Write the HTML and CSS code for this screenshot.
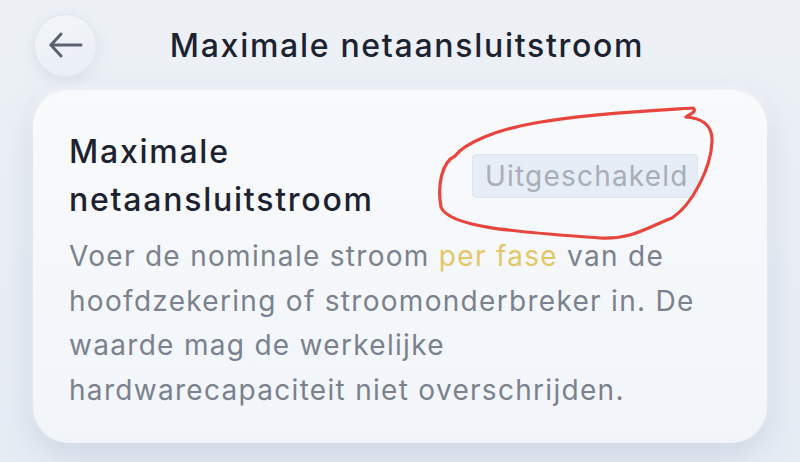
FILE: index.html
```html
<!DOCTYPE html>
<html lang="nl">
<head>
    <meta charset="UTF-8">
    <meta name="viewport" content="width=device-width, initial-scale=1.0">
    <title>Maximale netaansluitstroom</title>
    <link rel="stylesheet" href="styles.css">
</head>
<body>
    <div class="page">
        <header class="topbar">
            <button class="back-btn" aria-label="Terug">
                <svg width="34" height="26" viewBox="0 0 34 26" fill="none" stroke="#5b6170" stroke-width="3" stroke-linecap="round" stroke-linejoin="round">
                    <path d="M2 13 H32"/>
                    <path d="M12 2 L2 13 L12 24"/>
                </svg>
            </button>
            <h1>Maximale netaansluitstroom</h1>
            <div class="spacer"></div>
        </header>

        <section class="card">
            <div class="setting-row">
                <h2>Maximale<br>netaansluitstroom</h2>
                <div class="input-wrap">
                    <input class="value-input" type="text" placeholder="Uitgeschakeld" disabled>
                </div>
            </div>
            <p class="hint">
                Voer de nominale stroom <span class="accent">per fase</span> van de<br>
                hoofdzekering of stroomonderbreker in. De<br>
                waarde mag de werkelijke<br>
                hardwarecapaciteit niet overschrijden.
            </p>
        </section>

        <!-- hand-drawn annotation over the input -->
        <svg class="scribble" width="800" height="462" viewBox="0 0 800 462" fill="none">
            <path d="M686 117 C692 113 697 111 693 108 C660 110 590 113 535 123 C495 130 465 143 455 156 C442 162 437 185 441 207 C449 228 520 232 600 238 C632 240 650 226 672 218 C692 205 711 168 712 142 C713 124 700 118 686 117" stroke="#e8453e" stroke-width="3.2" stroke-linecap="round" stroke-linejoin="round"/>
        </svg>
    </div>
</body>
</html>
```

FILE: styles.css
```css
* {
    box-sizing: border-box;
}
body {
    margin: 0;
    font-family: Inter, "Open Sans", sans-serif;
    background: linear-gradient(180deg, #edf1f6 0%, #e6ecf4 100%);
    color: #1c2230;
    width: 800px;
    height: 462px;
    overflow: hidden;
}
.page {
    position: relative;
    height: 462px;
}
.topbar {
    display: flex;
    align-items: center;
    padding: 13px 34px 0 34px;
    height: 77px;
}
.back-btn {
    width: 63px;
    height: 63px;
    border-radius: 50%;
    border: 1px solid #dfe5ee;
    background: linear-gradient(160deg, #f3f6fa 0%, #e9eef5 100%);
    box-shadow: 0 4px 14px rgba(160, 175, 200, 0.25);
    display: flex;
    align-items: center;
    justify-content: center;
    padding: 0;
    flex-shrink: 0;
}
.spacer {
    width: 63px;
    flex-shrink: 0;
}
h1 {
    flex: 1;
    margin: 0;
    text-align: center;
    font-size: 32px;
    font-weight: 500;
    letter-spacing: 1.7px;
    padding-left: 14px;
}
.card {
    margin: 13px 33px 0 33px;
    height: 353px;
    border-radius: 36px;
    background: linear-gradient(180deg, #f9fafc 0%, #f1f5f9 100%);
    box-shadow: 0 10px 30px rgba(150, 166, 192, 0.35), 0 -2px 10px rgba(255, 255, 255, 0.8);
    padding: 38px 36px 0 36px;
}
.setting-row {
    display: flex;
    align-items: center;
    justify-content: space-between;
    margin-right: 33px;
}
h2 {
    margin: 0;
    font-size: 32px;
    font-weight: 500;
    letter-spacing: 1.75px;
    line-height: 48px;
}
.value-input {
    width: 226px;
    height: 44px;
    border: 1px solid #dbe4f0;
    border-radius: 4px;
    background: #e6edf7;
    font-family: inherit;
    font-size: 28px;
    letter-spacing: 1.2px;
    padding: 0 8px 0 12px;
    text-align: left;
}
.value-input::placeholder {
    color: #a9aeb6;
}
.hint {
    margin: 10px 0 0 0;
    font-size: 28px;
    letter-spacing: 1.3px;
    line-height: 44.5px;
    color: #7b818d;
}
.accent {
    color: #e2c767;
}
.scribble {
    position: absolute;
    left: 0;
    top: 0;
    pointer-events: none;
}
```
